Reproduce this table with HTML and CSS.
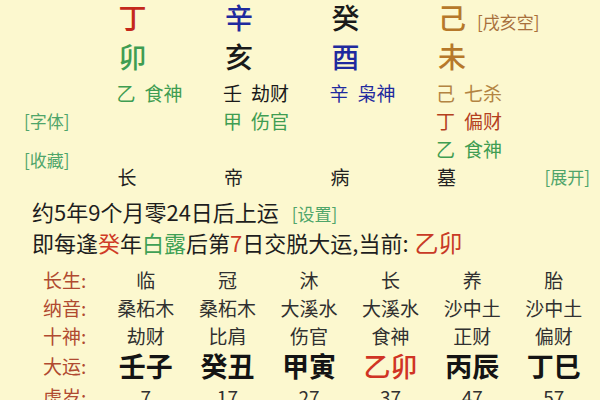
FILE: index.html
```html
<!DOCTYPE html>
<html lang="zh-CN">
<head>
<meta charset="utf-8">
<title>八字排盘</title>
<link rel="stylesheet" href="styles.css">
</head>
<body>
<div class="page">
  <div class="chart">
    <div class="side">
      <div class="link font-link">[字体]</div>
      <div class="link fav-link">[收藏]</div>
    </div>
    <div class="pillar">
      <div class="stem red">丁</div>
      <div class="branch green">卯</div>
      <div class="hid green"><span>乙</span><span>食神</span></div>
      <div class="phase">长</div>
    </div>
    <div class="pillar">
      <div class="stem blue">辛</div>
      <div class="branch black">亥</div>
      <div class="hid black"><span>壬</span><span>劫财</span></div>
      <div class="hid green"><span>甲</span><span>伤官</span></div>
      <div class="phase">帝</div>
    </div>
    <div class="pillar">
      <div class="stem black">癸</div>
      <div class="branch blue">酉</div>
      <div class="hid blue"><span>辛</span><span>枭神</span></div>
      <div class="phase">病</div>
    </div>
    <div class="pillar">
      <div class="stem brown">己<span class="void">[戌亥空]</span></div>
      <div class="branch brown">未</div>
      <div class="hid tan"><span>己</span><span>七杀</span></div>
      <div class="hid rust"><span>丁</span><span>偏财</span></div>
      <div class="hid green"><span>乙</span><span>食神</span></div>
      <div class="phase">墓</div>
    </div>
    <div class="side-right">
      <div class="link expand-link">[展开]</div>
    </div>
  </div>

  <div class="info">
    <div class="line">约5年9个月零24日后上运<span class="link set-link">[设置]</span></div>
    <div class="line">即每逢<span class="hl-red">癸</span>年<span class="hl-green">白露</span>后第<span class="hl-red">7</span>日交脱大运,当前: <span class="current">乙卯</span></div>
  </div>

  <div class="luck">
    <div class="lbl">长生:</div>
    <div class="cell">临</div><div class="cell">冠</div><div class="cell">沐</div><div class="cell">长</div><div class="cell">养</div><div class="cell">胎</div>
    <div class="lbl">纳音:</div>
    <div class="cell">桑柘木</div><div class="cell">桑柘木</div><div class="cell">大溪水</div><div class="cell">大溪水</div><div class="cell">沙中土</div><div class="cell">沙中土</div>
    <div class="lbl">十神:</div>
    <div class="cell">劫财</div><div class="cell">比肩</div><div class="cell">伤官</div><div class="cell">食神</div><div class="cell">正财</div><div class="cell">偏财</div>
    <div class="lbl">大运:</div>
    <div class="cell big">壬子</div><div class="cell big">癸丑</div><div class="cell big">甲寅</div><div class="cell big now">乙卯</div><div class="cell big">丙辰</div><div class="cell big">丁巳</div>
    <div class="lbl">虚岁:</div>
    <div class="cell">7</div><div class="cell">17</div><div class="cell">27</div><div class="cell">37</div><div class="cell">47</div><div class="cell">57</div>
  </div>
</div>
</body>
</html>
```

FILE: styles.css
```css
html, body {
  margin: 0;
  padding: 0;
  background: #fcf8cf;
}
body {
  width: 600px;
  height: 400px;
  overflow: hidden;
  font-family: "Noto Sans CJK SC", "Noto Sans", sans-serif;
  color: #1e1e1e;
}
.page {
  display: flex;
  flex-direction: column;
}

/* top chart */
.chart {
  display: flex;
}
.side, .pillar, .side-right {
  display: grid;
  grid-template-rows: 34px 45px 28px 28px 28px 28px;
}
.side {
  width: 119px;
  padding-left: 24px;
  box-sizing: border-box;
}
.pillar {
  width: 107px;
}
.side-right {
  flex: 1;
  justify-items: end;
  padding-right: 10px;
}
.link {
  font-size: 17px;
  line-height: 28px;
  color: #4fa56a;
  white-space: nowrap;
}
.font-link { grid-row: 4; }
.fav-link { grid-row: 5 / span 2; align-self: center; margin-bottom: 6px; }
.expand-link { grid-row: 6; }

.stem {
  font-size: 28px;
  line-height: 34px;
  font-weight: 500;
  display: flex;
  align-items: baseline;
  white-space: nowrap;
}
.branch {
  font-size: 28px;
  line-height: 45px;
  font-weight: 500;
}
.void {
  font-size: 17px;
  font-weight: 400;
  color: #a8703c;
  margin-left: 11px;
}
.hid {
  font-size: 19px;
  line-height: 28px;
  display: flex;
  gap: 9px;
  white-space: nowrap;
  margin-left: -2px;
}
.phase {
  grid-row: 6;
  font-size: 19px;
  line-height: 28px;
  color: #222;
  margin-left: -1px;
}

.red { color: #c4281c; }
.blue { color: #1f2a9e; }
.black { color: #1a1a1a; }
.brown { color: #b6782a; }
.green { color: #3f9d52; }
.tan { color: #b38442; }
.rust { color: #b4401e; }

/* info lines */
.info {
  margin-top: 6px;
  padding-left: 32px;
}
.line {
  font-size: 22px;
  line-height: 28px;
  white-space: nowrap;
  display: flex;
  align-items: baseline;
}
.set-link {
  margin-left: 13px;
}
.hl-red { color: #cf3b26; }
.hl-green { color: #3fa055; }
.current {
  font-size: 24px;
  color: #c83a26;
  margin-left: 6px;
}

/* luck table */
.luck {
  margin-top: 10px;
  padding-left: 43px;
  display: grid;
  grid-template-columns: 62px repeat(6, 81.6px);
  grid-template-rows: 28px 28px 28px 32px 30px;
}
.lbl {
  font-size: 19px;
  line-height: 28px;
  color: #b04a30;
  align-self: center;
}
.cell {
  font-size: 19px;
  text-align: center;
  color: #303030;
  align-self: center;
  line-height: 28px;
  white-space: nowrap;
}
.cell.big {
  font-size: 27px;
  font-weight: 700;
  line-height: 32px;
  color: #141414;
}
.cell.big.now {
  color: #d03424;
  font-weight: 500;
}
```
